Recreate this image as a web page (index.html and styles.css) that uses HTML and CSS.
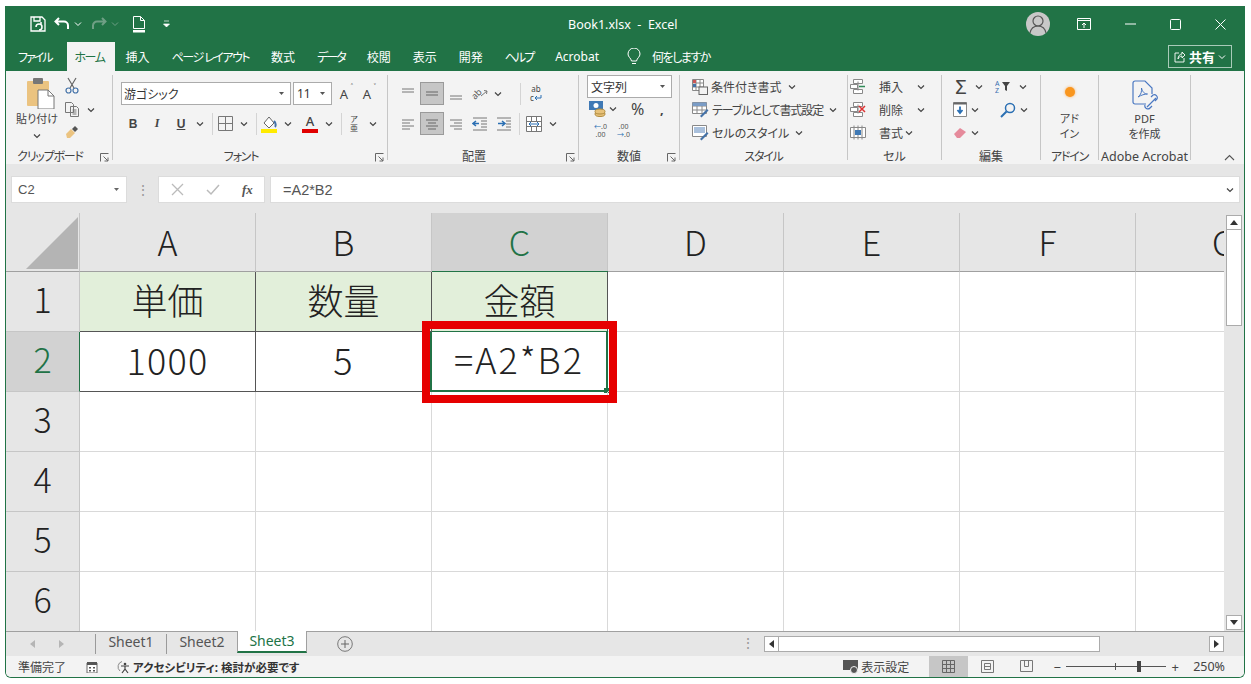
FILE: index.html
```html
<!DOCTYPE html>
<html lang="ja">
<head>
    <meta charset="UTF-8">
    <title>Book1.xlsx - Excel</title>
    <link rel="stylesheet" href="styles.css">
</head>
<body>
<svg class="defs" width="0" height="0">
    <symbol id="chev" viewBox="0 0 8 6"><path d="M1 1.5 4 4.5 7 1.5" fill="none" stroke="#444" stroke-width="1.2"/></symbol>
    <symbol id="launch" viewBox="0 0 9 9"><path d="M.5 8.5V.5h8M8 8 3.5 3.5M8 4.5V8H4.5" fill="none" stroke="#666"/></symbol>
    <symbol id="lines-top" viewBox="0 0 16 16"><path d="M2 3h12M2 6h12" stroke="#777" fill="none"/></symbol>
    <symbol id="lines-mid" viewBox="0 0 16 16"><path d="M2 6h12M2 9h12" stroke="#666" fill="none"/></symbol>
    <symbol id="lines-bot" viewBox="0 0 16 16"><path d="M2 10h12M2 13h12" stroke="#777" fill="none"/></symbol>
    <symbol id="al-left" viewBox="0 0 16 16"><path d="M2 4h12M2 7h8M2 10h12M2 13h8" stroke="#777" fill="none"/></symbol>
    <symbol id="al-center" viewBox="0 0 16 16"><path d="M2 4h12M4 7h8M2 10h12M4 13h8" stroke="#666" fill="none"/></symbol>
    <symbol id="al-right" viewBox="0 0 16 16"><path d="M2 4h12M6 7h8M2 10h12M6 13h8" stroke="#777" fill="none"/></symbol>
</svg>

<div class="window">
    <!-- タイトルバー -->
    <header class="titlebar">
        <div class="qat">
            <svg class="qat-save" width="18" height="18" viewBox="0 0 18 18"><path d="M2 2h11l3 3v11H2zM5 2v4h6V2" fill="none" stroke="#fff" stroke-width="1.3"/><path d="M7 12a3 3 0 1 1 3 3M12 9v-2" fill="none" stroke="#fff" stroke-width="1.5"/></svg>
            <svg class="qat-undo" width="16" height="14" viewBox="0 0 16 14"><path d="M5 1 1.5 4.5 5 8M2 4.5h8a4 4 0 0 1 4 4V12" fill="none" stroke="#fff" stroke-width="2"/></svg>
            <svg class="qat-chev" width="8" height="6"><path d="M1 1.5 4 4.5 7 1.5" fill="none" stroke="#fff"/></svg>
            <svg class="qat-redo" width="16" height="14" viewBox="0 0 16 14"><path d="M11 1l3.500 3.500L11 8M14 4.500H6a4 4 0 0 0-4 4V12" fill="none" stroke="#6f9f85" stroke-width="2"/></svg>
            <svg class="qat-chev" width="8" height="6"><path d="M1 1.5 4 4.5 7 1.5" fill="none" stroke="#6f9f85"/></svg>
            <svg class="qat-new" width="14" height="17" viewBox="0 0 14 17"><path d="M1.500.5h7l4 4v8h-11zM8.500.5v4h4" fill="none" stroke="#fff"/><path d="M1 14h12v2.500H1z" fill="#fff"/></svg>
            <svg class="qat-more" width="7" height="8" viewBox="0 0 7 8"><path d="M1 1h5M.5 4h6L3.500 7z" fill="#fff" stroke="#fff" stroke-width=".7"/></svg>
        </div>
        <div class="doc-title">Book1.xlsx&nbsp; -&nbsp; Excel</div>
        <div class="win-controls">
            <div class="avatar"><svg width="24" height="24" viewBox="0 0 24 24"><circle cx="12" cy="9" r="5" fill="none" stroke="#555" stroke-width="1.2"/><path d="M4 21c1-5 4-7 8-7s7 2 8 7" fill="none" stroke="#555" stroke-width="1.2"/></svg></div>
            <svg class="ctl-display" width="14" height="12" viewBox="0 0 14 12"><path d="M.5.500h13v11H.5zM.5 2.500h13M7 10V5M5 7l2-2 2 2" fill="none" stroke="#fff"/></svg>
            <svg class="ctl-min" width="11" height="2"><path d="M0 1h11" stroke="#fff"/></svg>
            <svg class="ctl-max" width="11" height="11"><rect x=".5" y=".5" width="10" height="10" rx="1" fill="none" stroke="#fff"/></svg>
            <svg class="ctl-close" width="11" height="11"><path d="M.5.500l10 10M10.500.500l-10 10" stroke="#fff"/></svg>
        </div>
    </header>

    <!-- タブ -->
    <nav class="tabs">
        <span class="tab tab-file tab-tight">ファイル</span>
        <span class="tab tab-active tab-kana">ホーム</span>
        <span class="tab">挿入</span>
        <span class="tab tab-kana">ページ レイアウト</span>
        <span class="tab">数式</span>
        <span class="tab tab-tight">データ</span>
        <span class="tab">校閲</span>
        <span class="tab">表示</span>
        <span class="tab">開発</span>
        <span class="tab tab-tight">ヘルプ</span>
        <span class="tab">Acrobat</span>
        <svg class="bulb" width="14" height="18" viewBox="0 0 14 18"><path d="M4.500 13C4 10 1 9 1 6a6 6 0 0 1 12 0c0 3-3 4-3.500 7zM5 15.500h4" fill="none" stroke="#fff"/></svg>
        <span class="tab tab-tell tab-kana">何をしますか</span>
        <div class="share">
            <svg width="12" height="12" viewBox="0 0 12 12"><path d="M5 2H1v9h9V7M4 8c0-3 2-5 4-5V1l3 3-3 3V5C6 5 5 6 4 8z" fill="none" stroke="#fff" stroke-width=".9"/></svg>
            <b>共有</b>
            <svg width="8" height="6"><path d="M1 1.500 4 4.500 7 1.500" fill="none" stroke="#fff"/></svg>
        </div>
    </nav>

    <!-- リボン -->
    <section class="ribbon">
        <div class="group g-clip">
            <div class="clip-body">
                <div class="paste">
                    <svg width="28" height="31" viewBox="0 0 28 31"><rect x="0" y="3" width="22" height="25" rx="1" fill="#ebc380"/><rect x="6" y="0" width="10" height="6" rx="1" fill="#777"/><path d="M11 12h10l6 6v13H11z" fill="#fff" stroke="#777"/><path d="M21 12v6h6" fill="none" stroke="#777"/></svg>
                    <span class="paste-text">貼り付け</span>
                    <svg class="chev" width="8" height="6"><use href="#chev"/></svg>
                </div>
                <div class="clip-tools">
                    <svg width="14" height="17" viewBox="0 0 14 17"><path d="M3 1l6 10M11 1 5 11" stroke="#666" stroke-width="1.2"/><circle cx="3.500" cy="13.500" r="2.500" fill="none" stroke="#4472a8" stroke-width="1.2"/><circle cx="10.500" cy="13.500" r="2.500" fill="none" stroke="#4472a8" stroke-width="1.2"/></svg>
                    <svg width="14" height="15" viewBox="0 0 14 15"><path d="M.5.500h6l2 2v8h-8zM5.500 4.500h6l2 2v8h-8z" fill="#f3f3f3" stroke="#777"/><path d="M7.500 8h4M7.500 10h4M7.500 12h4" stroke="#777"/></svg>
                    <svg width="14" height="14" viewBox="0 0 14 14"><path d="M1 9l5-5 4 4-5 5H2z" fill="#ebc380"/><path d="M7 4l3-3 3 3-3 3z" fill="#555"/></svg>
                </div>
                <svg class="chev clip-chev" width="8" height="6"><use href="#chev"/></svg>
            </div>
            <div class="group-label label-left label-kana">クリップボード<svg class="launcher" width="9" height="9"><use href="#launch"/></svg></div>
        </div>

        <div class="group g-font">
            <div class="group-body two-rows">
                <div class="row">
                    <div class="select select-font">游ゴシック<svg width="7" height="5" viewBox="0 0 7 5"><path d="M1 1h5L3.500 4z" fill="#555"/></svg></div>
                    <div class="select select-size">11<svg width="7" height="5" viewBox="0 0 7 5"><path d="M1 1h5L3.500 4z" fill="#555"/></svg></div>
                    <span class="grow-a">A<i>˄</i></span>
                    <span class="grow-a">A<i>˅</i></span>
                </div>
                <div class="row">
                    <span class="slot fmt-b">B</span>
                    <span class="slot fmt-i">I</span>
                    <span class="slot fmt-u">U</span>
                    <svg class="chev" width="8" height="6"><use href="#chev"/></svg>
                    <span class="vsep"></span>
                    <span class="slot"><svg width="15" height="15" viewBox="0 0 15 15"><path d="M.5.500h14v14H.5zM7.500.500v14M.5 7.500h14" fill="none" stroke="#777"/></svg></span>
                    <svg class="chev chev-wide" width="8" height="6"><use href="#chev"/></svg>
                    <span class="vsep"></span>
                    <span class="slot"><svg width="16" height="18" viewBox="0 0 16 18"><path d="M3 8l5-6 5 6-5 5z" fill="#fff" stroke="#666"/><path d="M13 6c2 2 2 5 1 6" fill="none" stroke="#4472a8" stroke-width="2"/><rect y="14" width="16" height="4" fill="#ffeb00"/></svg></span>
                    <svg class="chev" width="8" height="6"><use href="#chev"/></svg>
                    <span class="slot font-color">A</span>
                    <svg class="chev" width="8" height="6"><use href="#chev"/></svg>
                    <span class="vsep"></span>
                    <span class="slot furigana">ア<br>亜</span>
                    <svg class="chev" width="8" height="6"><use href="#chev"/></svg>
                </div>
            </div>
            <div class="group-label label-left label-kana">フォント<svg class="launcher" width="9" height="9"><use href="#launch"/></svg></div>
        </div>

        <div class="group g-align">
            <div class="group-body two-rows align-body">
                <div class="row">
                    <span class="slot"><svg width="16" height="16"><use href="#lines-top"/></svg></span>
                    <span class="slot slot-on"><svg width="16" height="16"><use href="#lines-mid"/></svg></span>
                    <span class="slot"><svg width="16" height="16"><use href="#lines-bot"/></svg></span>
                    <span class="slot"><svg class="orient-icon" width="16" height="15" viewBox="0 0 16 15"><text x="0" y="11" class="orient" transform="rotate(-45 5 9)">ab</text><path d="M9 10l6-5M12 4.500l3 .5-.5 3" fill="none" stroke="#777"/></svg></span>
                    <svg class="chev chev-tight" width="8" height="6"><use href="#chev"/></svg>
                    <span class="vsep vsep-wrap"></span>
                    <span class="slot wrap-icon">ab<br>c<svg width="8" height="6" viewBox="0 0 8 6"><path d="M7 0v3H1M3 1 1 3l2 2" fill="none" stroke="#2a6fb3"/></svg></span>
                </div>
                <div class="row">
                    <span class="slot"><svg width="16" height="16"><use href="#al-left"/></svg></span>
                    <span class="slot slot-on"><svg width="16" height="16"><use href="#al-center"/></svg></span>
                    <span class="slot"><svg width="16" height="16"><use href="#al-right"/></svg></span>
                    <span class="slot"><svg width="16" height="15" viewBox="0 0 16 15"><path d="M1 7.500h6M4 5 1 7.500 4 10" fill="none" stroke="#2a6fb3" stroke-width="1.500"/><path d="M1 2h14M9 5h6M9 8h6M9 11h6M1 14h14" stroke="#777"/></svg></span>
                    <span class="slot"><svg width="16" height="15" viewBox="0 0 16 15"><path d="M8 7.500H2M6 5l3 2.500L6 10" fill="none" stroke="#2a6fb3" stroke-width="1.500"/><path d="M1 2h14M10 5h5M10 8h5M10 11h5M1 14h14" stroke="#777"/></svg></span>
                    <span class="vsep vsep-merge"></span>
                    <span class="slot"><svg width="16" height="16" viewBox="0 0 16 16"><path d="M.5.500h15v15H.5zM.5 5.500h15M.5 10.500h15M5.500.500v5M10.500.500v5M5.500 10.500v5M10.500 10.500v5" fill="#fff" stroke="#777"/><path d="M3 8h10M5 6 3 8l2 2M11 6l2 2-2 2" fill="none" stroke="#2a6fb3"/></svg></span>
                    <svg class="chev" width="8" height="6"><use href="#chev"/></svg>
                </div>
            </div>
            <div class="group-label label-left">配置<svg class="launcher" width="9" height="9"><use href="#launch"/></svg></div>
        </div>

        <div class="group g-number">
            <div class="group-body three-rows number-body">
                <div class="select select-format">文字列<svg width="7" height="5" viewBox="0 0 7 5"><path d="M1 1h5L3.500 4z" fill="#555"/></svg></div>
                <div class="row num-row">
                    <svg width="17" height="16" viewBox="0 0 17 16"><rect width="14" height="9" fill="#3f79b5"/><circle cx="7" cy="4.500" r="2.500" fill="#fff"/><ellipse cx="11" cy="13" rx="5" ry="2.500" fill="#e8c27a" stroke="#b08b3e"/><ellipse cx="11" cy="10.500" rx="5" ry="2.500" fill="#e8c27a" stroke="#b08b3e"/></svg>
                    <svg class="chev" width="8" height="6"><use href="#chev"/></svg>
                    <span class="percent">%</span>
                    <span class="comma">,</span>
                </div>
                <div class="row num-row">
                    <span class="dec"><i>←</i>.0<br>.00</span>
                    <span class="dec">.00<br><i>→</i>.0</span>
                </div>
            </div>
            <div class="group-label">数値<svg class="launcher" width="9" height="9"><use href="#launch"/></svg></div>
        </div>

        <div class="group g-style">
            <div class="group-body three-rows style-body">
                <div class="cmd"><svg width="16" height="16" viewBox="0 0 16 16"><path d="M.5.500h11v11H.5zM4 .500v11M8 .500v11M.5 4h11M.5 8h11" fill="#fff" stroke="#888"/><path d="M1 1h3v3H1z" fill="#c55"/><path d="M1 5h3v3H1z" fill="#4472a8"/><rect x="7" y="8" width="8.500" height="7.500" fill="#f3f3f3" stroke="#666"/></svg>条件付き書式<svg class="chev" width="8" height="6"><use href="#chev"/></svg></div>
                <div class="cmd"><svg width="17" height="16" viewBox="0 0 17 16"><path d="M.5.500h14v11H.5zM.5 4h14M5 4v7.500M10 4v7.500M.5 8h14" fill="#fff" stroke="#888"/><path d="M.5.500h14V4H.5z" fill="#7a9cc6"/><path d="M8 14l7-7 1.500 1.500-7 7z" fill="#4472a8"/></svg><span class="cmd-tight">テーブルとして書式設定</span><svg class="chev" width="8" height="6"><use href="#chev"/></svg></div>
                <div class="cmd"><svg width="17" height="16" viewBox="0 0 17 16"><path d="M.5.500h14v11H.5z" fill="#fff" stroke="#888"/><path d="M2 2h11v6H2z" fill="#a9c0dc"/><path d="M8 14l7-7 1.500 1.500-7 7z" fill="#4472a8"/></svg>セルのスタイル<svg class="chev" width="8" height="6"><use href="#chev"/></svg></div>
            </div>
            <div class="group-label label-kana">スタイル</div>
        </div>

        <div class="group g-cells">
            <div class="group-body three-rows cells-body">
                <div class="cmd"><svg width="16" height="15" viewBox="0 0 16 15"><path d="M3.500.500h9v4h-9zM.5 5.500h7v4h-7zM3.500 10.500h9v4h-9zM8 2.500v9" fill="#fff" stroke="#888"/><path d="M9 7.500h6" stroke="#2f8a57" stroke-width="1.500"/></svg><span class="cmd-text">挿入</span><svg class="chev chev-far" width="8" height="6"><use href="#chev"/></svg></div>
                <div class="cmd"><svg width="16" height="15" viewBox="0 0 16 15"><path d="M3.500.500h9v4h-9zM.5 5.500h7v4h-7zM3.500 10.500h9v4h-9zM8 2.500v9" fill="#fff" stroke="#888"/><path d="M9 4l6 6M15 4l-6 6" stroke="#d33" stroke-width="1.500"/></svg><span class="cmd-text">削除</span><svg class="chev chev-far" width="8" height="6"><use href="#chev"/></svg></div>
                <div class="cmd"><svg width="16" height="15" viewBox="0 0 16 15"><path d="M.5 2.500h15v10H.5zM4 .500v14M8 .500v14M12 .500v14" fill="#fff" stroke="#888"/><rect x="5" y="5" width="6" height="5" fill="#3f79b5"/></svg><span class="cmd-text">書式</span><svg class="chev chev-near" width="8" height="6"><use href="#chev"/></svg></div>
            </div>
            <div class="group-label">セル</div>
        </div>

        <div class="group g-edit">
            <div class="group-body three-rows edit-body">
                <div class="row edit-row">
                    <span class="sigma">Σ</span>
                    <svg class="chev chev-sigma" width="8" height="6"><use href="#chev"/></svg>
                    <svg class="sort" width="16" height="14" viewBox="0 0 16 14"><text x="0" y="6" class="sort-az">A</text><text x="0" y="13" class="sort-az">Z</text><path d="M7 2h8l-3 4v5l-2-1V6z" fill="#444"/></svg>
                    <svg class="chev" width="8" height="6"><use href="#chev"/></svg>
                </div>
                <div class="row edit-row">
                    <svg width="14" height="15" viewBox="0 0 14 15"><path d="M.5.500h13v14H.5z" fill="#fff" stroke="#888"/><path d="M.5.500h13v2H.5z" fill="#666"/><path d="M7 4.500v6M4.500 8 7 11l2.500-3" fill="none" stroke="#2a6fb3" stroke-width="1.800"/></svg>
                    <svg class="chev chev-fill" width="8" height="6"><use href="#chev"/></svg>
                    <svg class="find" width="16" height="16" viewBox="0 0 16 16"><circle cx="10" cy="6" r="4.500" fill="none" stroke="#2a6fb3" stroke-width="1.500"/><path d="M6.500 9.500 1 15" stroke="#2a6fb3" stroke-width="2"/></svg>
                    <svg class="chev" width="8" height="6"><use href="#chev"/></svg>
                </div>
                <div class="row edit-row">
                    <svg width="14" height="12" viewBox="0 0 14 12"><path d="M1 7l6-6 6 4-6 6H4z" fill="#e58a9b"/></svg>
                    <svg class="chev chev-fill" width="8" height="6"><use href="#chev"/></svg>
                </div>
            </div>
            <div class="group-label">編集</div>
        </div>

        <div class="group g-addin">
            <div class="group-body big-btn">
                <span class="addin-dot"></span>
                <span class="big-text">アド<br>イン</span>
            </div>
            <div class="group-label label-kana">アドイン</div>
        </div>

        <div class="group g-acro">
            <div class="group-body big-btn">
                <svg class="acro-icon" width="26" height="32" viewBox="0 0 26 32"><path d="M14 24H3a2 2 0 0 1-2-2V3a2 2 0 0 1 2-2h10l7 7v6" fill="none" stroke="#4a78c2" stroke-width="1.200"/><path d="M6 17c3-2 4-6 3.500-9 1 4 3 6 6 6-3 0-6 1-9.500 3z" fill="none" stroke="#4a78c2"/><path d="M15 27l9-9M13 25a3 3 0 0 0 5 3l2-2M19 17l2-2a3 3 0 0 1 4 4l-2 2" fill="none" stroke="#4a78c2" stroke-width="1.200"/></svg>
                <span class="big-text">PDF<br>を作成</span>
            </div>
            <div class="group-label label-acro">Adobe Acrobat</div>
        </div>
        <svg class="collapse" width="11" height="7" viewBox="0 0 11 7"><path d="M1 6l4.500-4.500L10 6" fill="none" stroke="#555" stroke-width="1.100"/></svg>
    </section>

    <!-- 数式バー -->
    <section class="formula-bar">
        <div class="name-box">C2<svg width="7" height="5" viewBox="0 0 7 5"><path d="M1 1h5L3.500 4z" fill="#666"/></svg></div>
        <div class="fx-dots">⋮</div>
        <div class="fx-box">
            <svg width="13" height="13" viewBox="0 0 13 13"><path d="M1 1l11 11M12 1 1 12" stroke="#bbb" stroke-width="1.300"/></svg>
            <svg width="14" height="12" viewBox="0 0 14 12"><path d="M1 6l4 4 8-9" fill="none" stroke="#bbb" stroke-width="1.500"/></svg>
            <span class="fx">fx</span>
        </div>
        <div class="formula-input">=A2*B2<svg width="8" height="6"><use href="#chev"/></svg></div>
    </section>

    <!-- シート -->
    <section class="sheet-area">
        <div class="sheet">
            <div class="corner"><span class="corner-tri"></span></div>
            <div class="col-head">A</div>
            <div class="col-head">B</div>
            <div class="col-head col-on">C</div>
            <div class="col-head">D</div>
            <div class="col-head">E</div>
            <div class="col-head">F</div>
            <div class="col-head">G</div>

            <div class="row-head">1</div>
            <div class="cell cell-title">単価</div>
            <div class="cell cell-title">数量</div>
            <div class="cell cell-title cell-title-on">金額</div>
            <div class="cell"></div><div class="cell"></div><div class="cell"></div><div class="cell"></div>

            <div class="row-head row-on">2</div>
            <div class="cell cell-data">1000</div>
            <div class="cell cell-data">5</div>
            <div class="cell cell-active">=A2*B2<span class="fill-handle"></span></div>
            <div class="cell"></div><div class="cell"></div><div class="cell"></div><div class="cell"></div>

            <div class="row-head">3</div>
            <div class="cell"></div><div class="cell"></div><div class="cell"></div><div class="cell"></div><div class="cell"></div><div class="cell"></div><div class="cell"></div>
            <div class="row-head">4</div>
            <div class="cell"></div><div class="cell"></div><div class="cell"></div><div class="cell"></div><div class="cell"></div><div class="cell"></div><div class="cell"></div>
            <div class="row-head">5</div>
            <div class="cell"></div><div class="cell"></div><div class="cell"></div><div class="cell"></div><div class="cell"></div><div class="cell"></div><div class="cell"></div>
            <div class="row-head">6</div>
            <div class="cell"></div><div class="cell"></div><div class="cell"></div><div class="cell"></div><div class="cell"></div><div class="cell"></div><div class="cell"></div>

            <div class="red-box"></div>
        </div>
        <div class="vscroll">
            <div class="sb-btn"><svg width="8" height="5"><path d="M0 5h8L4 0z" fill="#333"/></svg></div>
            <div class="vthumb"></div>
            <div class="sb-btn sb-btn-end"><svg width="8" height="5"><path d="M0 0h8L4 5z" fill="#333"/></svg></div>
        </div>
    </section>

    <!-- シートタブ -->
    <section class="sheet-tabs">
        <svg class="tab-nav" width="34" height="8" viewBox="0 0 34 8"><path d="M5 0v8L0 4zM29 0v8l5-4z" fill="#b5b5b5"/></svg>
        <span class="tab-sep"></span>
        <span class="sheet-tab">Sheet1</span>
        <span class="tab-sep"></span>
        <span class="sheet-tab">Sheet2</span>
        <span class="sheet-tab sheet-tab-on">Sheet3</span>
        <svg class="add-sheet" width="16" height="16" viewBox="0 0 16 16"><circle cx="8" cy="8" r="7.300" fill="none" stroke="#777"/><path d="M8 4v8M4 8h8" stroke="#666"/></svg>
        <span class="hdots">⋮</span>
        <div class="hscroll">
            <div class="sb-btn"><svg width="5" height="8"><path d="M5 0v8L0 4z" fill="#333"/></svg></div>
            <div class="hthumb"></div>
            <div class="sb-btn"><svg width="5" height="8"><path d="M0 0v8l5-4z" fill="#333"/></svg></div>
        </div>
    </section>

    <!-- ステータスバー -->
    <footer class="statusbar">
        <span class="ready">準備完了</span>
        <svg class="st-macro" width="12" height="12" viewBox="0 0 12 12"><path d="M1 2h10v10H1z" fill="#fff" stroke="#666"/><path d="M1 1h10v3H1zM3 6h2v1.500H3zM7 6h2v1.500H7zM3 9h2v1.500H3zM7 9h2v1.500H7z" fill="#555"/></svg>
        <svg class="st-access" width="14" height="14" viewBox="0 0 14 14"><path d="M5 1.500A5.500 5.500 0 0 0 3 11" fill="none" stroke="#888"/><circle cx="8" cy="4" r="1.300" fill="#444"/><path d="M4 6h8M8 6v3l-3 4M8 9l3 4" fill="none" stroke="#444" stroke-width="1.200"/></svg>
        <b class="access-text">アクセシビリティ: 検討が必要です</b>
        <div class="display-set">
            <svg width="16" height="14" viewBox="0 0 16 14"><rect width="15" height="10" fill="#555"/><circle cx="11" cy="10" r="3.500" fill="#555" stroke="#f3f3f3"/></svg>
            <span>表示設定</span>
        </div>
        <div class="views">
            <span class="view view-on"><svg width="13" height="13" viewBox="0 0 13 13"><path d="M.5.500h12v12H.5zM4.500.500v12M8.500.500v12M.5 4.500h12M.5 8.500h12" fill="none" stroke="#666"/></svg></span>
            <span class="view"><svg width="13" height="13" viewBox="0 0 13 13"><path d="M.5.500h12v12H.5zM3.500 3.500h6v6h-6zM3.500 6.500h6" fill="none" stroke="#777"/></svg></span>
            <span class="view"><svg width="13" height="13" viewBox="0 0 13 13"><path d="M.5.500h12v11H.5zM4.500.500v6h4v-6" fill="none" stroke="#777"/></svg></span>
        </div>
        <div class="zoom-slider">
            <span class="zoom-sign">−</span>
            <div class="zoom-track"><i class="zoom-tick"></i><i class="zoom-thumb"></i></div>
            <span class="zoom-sign">+</span>
        </div>
        <span class="zoom-value">250%</span>
    </footer>
</div>
</body>
</html>
```

FILE: styles.css
```css
/* 基本 */
* {
    box-sizing: border-box;
}

html, body {
    margin: 0;
    height: 100%;
    overflow: hidden;
    background-color: #ffffff;
}

body {
    font-family: "Noto Sans", "Noto Sans CJK JP", sans-serif;
    font-feature-settings: "palt";
    color: #444;
}

.defs {
    position: absolute;
}

svg {
    display: block;
    flex: none;
}

.window {
    width: 1240px;
    height: 672px;
    margin: 6px 0 0 5px;
    display: flex;
    flex-direction: column;
    border: 1px solid #217346;
    border-top: none;
    border-radius: 0 0 6px 6px;
    overflow: hidden;
}

/* タイトルバー */
.titlebar {
    height: 36px;
    flex: none;
    background-color: #217346;
    display: flex;
    align-items: center;
    position: relative;
    color: #fff;
}

.qat {
    display: flex;
    align-items: center;
    padding-left: 23px;
}

.qat-undo { margin-left: 7px; }
.qat-chev { margin-left: 4px; }
.qat-redo { margin-left: 9px; }
.qat-new { margin-left: 13px; }
.qat-more { margin-left: 17px; }

.doc-title {
    position: absolute;
    left: 562px;
    top: 10px;
    font-size: 12.5px;
    line-height: 18px;
}

.win-controls {
    margin-left: auto;
    display: flex;
    align-items: center;
    padding-right: 18px;
}

.avatar {
    width: 24px;
    height: 24px;
    border-radius: 50%;
    background-color: #c8c8c8;
}

.ctl-display { margin-left: 27px; }
.ctl-min { margin-left: 34px; }
.ctl-max { margin-left: 34px; }
.ctl-close { margin-left: 34px; }

/* タブ */
.tabs {
    height: 29px;
    flex: none;
    background-color: #217346;
    display: flex;
    align-items: stretch;
    padding-left: 1px;
    color: #fff;
    font-size: 12px;
}

.tab {
    display: flex;
    align-items: center;
    padding: 0 11px;
    white-space: nowrap;
}

.tab-kana {
    letter-spacing: -1.5px;
}

.tab-tight {
    letter-spacing: -2px;
}

.tab-file {
    padding-right: 15px;
}

.tab-active {
    background-color: #f3f3f3;
    color: #217346;
    padding: 0 8px;
    width: 48px;
}

.bulb {
    align-self: center;
    margin-left: 17px;
}

.tab-tell {
    padding-left: 11px;
}

.share {
    margin: 3px 12px 3px auto;
    width: 64px;
    display: flex;
    align-items: center;
    justify-content: center;
    gap: 3px;
    border: 1px solid #a9cbb9;
    font-size: 13px;
}

/* リボン */
.ribbon {
    height: 93px;
    flex: none;
    background-color: #f3f3f3;
    display: flex;
    position: relative;
    font-size: 12px;
    color: #444;
}

.group {
    display: flex;
    flex-direction: column;
    height: 85px;
    margin-top: 4px;
    border-right: 1px solid #c6c6c6;
    position: relative;
}

.g-clip { width: 107px; }
.g-font { width: 275px; }
.g-align { width: 191px; }
.g-number { width: 101px; }
.g-style { width: 168px; }
.g-cells { width: 94px; }
.g-edit { width: 99px; }
.g-addin { width: 58px; }
.g-acro { width: 92px; }

.group-body,
.clip-body {
    height: 71px;
    flex: none;
}

.group-label {
    height: 14px;
    line-height: 21px;
    text-align: center;
    font-size: 12px;
    color: #444;
    white-space: nowrap;
    position: relative;
}

.label-left {
    padding-right: 18px;
}

.label-kana {
    letter-spacing: -1.2px;
}

.label-acro {
    font-size: 12.5px;
}

.launcher {
    position: absolute;
    right: 3px;
    top: 7px;
}

.row {
    display: flex;
    align-items: center;
}

.slot {
    width: 24px;
    height: 23px;
    flex: none;
    display: flex;
    align-items: center;
    justify-content: center;
}

.slot-on {
    background-color: #c6c6c6;
    border: 1px solid #9a9a9a;
}

.chev {
    width: 8px;
    height: 6px;
    margin: 0 3px;
}

.chev-wide {
    margin-left: 3px;
}

.vsep {
    width: 1px;
    height: 22px;
    background-color: #d4d4d4;
    margin: 0 0 0 5px;
    flex: none;
}

/* クリップボード */
.clip-body {
    display: flex;
    position: relative;
}

.paste {
    width: 52px;
    padding: 3px 0 0 10px;
    display: flex;
    flex-direction: column;
    align-items: center;
}

.paste svg:first-child {
    margin-left: 8px;
}

.paste-text {
    font-size: 11px;
    line-height: 16px;
    margin-top: 2px;
    white-space: nowrap;
}

.paste .chev {
    margin-top: 6px;
}

.clip-tools {
    display: flex;
    flex-direction: column;
    align-items: center;
    gap: 8px;
    width: 15px;
    margin-left: 6px;
    padding-top: 2px;
}

.clip-chev {
    margin: 32px 0 0 8px;
}

/* フォント */
.two-rows {
    padding: 7px 0 0 8px;
    display: flex;
    flex-direction: column;
    gap: 7px;
}

.select {
    height: 23px;
    background-color: #fff;
    border: 1px solid #ababab;
    display: flex;
    align-items: center;
    justify-content: space-between;
    padding: 0 5px 0 2px;
    font-size: 12px;
    color: #333;
}

.select-font { width: 170px; }
.select-size { width: 39px; margin-left: 2px; padding-left: 3px; }

.grow-a {
    width: 22px;
    margin-left: 1px;
    text-align: center;
    font-size: 13px;
    position: relative;
}

.grow-a i {
    font-style: normal;
    font-size: 8px;
    position: absolute;
    top: -4px;
    right: 2px;
}

.fmt-b { font-weight: 700; font-size: 12px; font-family: "Liberation Sans", sans-serif; }
.fmt-i { font-style: italic; font-weight: 700; font-size: 12px; font-family: "Liberation Serif", serif; }
.fmt-u { font-weight: 700; font-size: 12px; text-decoration: underline; font-family: "Liberation Sans", sans-serif; }

.font-color {
    margin-left: 3px;
    font-size: 13px;
    font-weight: 500;
    line-height: 14px;
    flex-direction: column;
    background: linear-gradient(#e00000, #e00000) center 17px / 16px 4px no-repeat;
    padding-bottom: 5px;
}

.furigana {
    font-size: 8px;
    line-height: 9px;
    display: block;
    text-align: center;
    padding-top: 2px;
}

/* 配置 */
.orient {
    font-size: 9px;
    fill: #555;
}

.orient-icon {
    overflow: visible;
}

.chev-tight {
    margin: 0 0 0 2px;
}

.vsep-wrap {
    margin: 0 3px 0 18px;
}

.vsep-merge {
    margin: 0 2px 0 3px;
}

.wrap-icon {
    display: block;
    font-size: 8px;
    line-height: 9px;
    text-align: center;
    padding-top: 2px;
}

.wrap-icon svg {
    display: inline-block;
}

/* 数値 */
.three-rows {
    padding-top: 0;
    display: flex;
    flex-direction: column;
}

.number-body {
    padding: 0 0 0 8px;
}

.select-format {
    width: 85px;
    flex: none;
    padding-left: 3px;
}

.num-row {
    height: 22px;
    padding-left: 2px;
    flex: none;
}

.percent {
    margin-left: 11px;
    font-size: 16px;
    width: 20px;
}

.comma {
    margin-left: 9px;
    font-weight: 700;
    font-size: 13px;
    line-height: 10px;
}

.dec {
    width: 23px;
    font-size: 7px;
    line-height: 8px;
    text-align: center;
    color: #555;
}

.dec i {
    font-style: normal;
    color: #2a6fb3;
}

/* スタイル・セル */
.style-body {
    padding-left: 12px;
}

.cells-body {
    padding-left: 2px;
}

.cmd {
    height: 23px;
    flex: none;
    display: flex;
    align-items: center;
    gap: 3px;
    white-space: nowrap;
}

.cmd-tight {
    letter-spacing: -1.1px;
}

.cells-body .cmd svg:first-child {
    margin-right: 10px;
}

.cmd-text {
    width: 23px;
}

.chev-far {
    margin-left: 12px;
}

.chev-near {
    margin-left: 0;
}

/* 編集 */
.edit-body {
    padding-left: 11px;
}

.edit-row {
    height: 23px;
    flex: none;
}

.sigma {
    font-size: 20px;
    width: 16px;
    line-height: 20px;
    color: #444;
    text-align: center;
}

.chev-sigma { margin-left: 6px; }
.sort { margin-left: 9px; margin-right: 5px; }
.chev-fill { margin-left: 4px; }
.find { margin-left: 18px; margin-right: 1px; }

.sort-az {
    font-size: 7px;
    fill: #3a6fb0;
}

/* アドイン・Acrobat */
.big-btn {
    display: flex;
    flex-direction: column;
    align-items: center;
    position: relative;
}

.addin-dot {
    width: 10px;
    height: 10px;
    margin-top: 12px;
    border-radius: 50%;
    background-color: #f9961e;
    box-shadow: 0 0 3px #f9b060;
}

.big-text {
    font-size: 11px;
    line-height: 15px;
    text-align: center;
    margin-top: 14px;
}

.acro-icon {
    margin-top: 5px;
}

.acro-icon + .big-text {
    margin-top: -1px;
}

.collapse {
    position: absolute;
    right: 9px;
    bottom: 3px;
}

/* 数式バー */
.formula-bar {
    height: 49px;
    flex: none;
    background-color: #e6e6e6;
    display: flex;
    align-items: flex-start;
    padding: 12px 4px 0 5px;
}

.name-box,
.fx-box,
.formula-input {
    height: 27px;
    background-color: #fff;
    border: 1px solid #dcdcdc;
    display: flex;
    align-items: center;
    font-family: "Liberation Sans", sans-serif;
}

.name-box {
    width: 116px;
    justify-content: space-between;
    padding: 0 6px;
    font-size: 13px;
    color: #555;
}

.fx-dots {
    width: 31px;
    text-align: center;
    line-height: 27px;
    font-size: 14px;
    color: #999;
}

.fx-box {
    width: 107px;
    padding-left: 12px;
    gap: 22px;
}

.fx {
    font-family: "Liberation Serif", serif;
    font-style: italic;
    font-weight: 700;
    font-size: 13px;
    color: #555;
}

.formula-input {
    flex: 1;
    margin-left: 5px;
    justify-content: space-between;
    padding: 0 5px 0 12px;
    font-size: 14.5px;
    color: #555;
}

/* シート */
.sheet-area {
    height: 418px;
    flex: none;
    display: flex;
    background-color: #e6e6e6;
}

.sheet {
    width: 1218px;
    height: 418px;
    flex: none;
    overflow: hidden;
    position: relative;
    display: grid;
    grid-template-columns: 74px repeat(7, 176px);
    grid-template-rows: 59px repeat(6, 60px);
    font-family: "Noto Sans CJK JP", sans-serif;
    font-feature-settings: normal;
    font-weight: 300;
    font-size: 36px;
    color: #222;
    background-color: #fff;
}

.corner {
    background-color: #e6e6e6;
    border-right: 1px solid #c6c6c6;
    border-bottom: 1px solid #a0a0a0;
    position: relative;
}

.corner-tri {
    position: absolute;
    right: 1px;
    bottom: 2px;
    width: 52px;
    height: 52px;
    background-color: #b4b4b4;
    clip-path: polygon(100% 0, 100% 100%, 0 100%);
}

.col-head {
    background-color: #e6e6e6;
    border-right: 1px solid #c6c6c6;
    border-bottom: 1px solid #a0a0a0;
    display: flex;
    align-items: center;
    justify-content: center;
    font-size: 34px;
    padding-bottom: 2px;
}

.col-on {
    background-color: #d2d2d2;
    color: #217346;
    border-bottom-color: #217346;
}

.row-head {
    background-color: #e6e6e6;
    border-right: 1px solid #c6c6c6;
    border-bottom: 1px solid #c6c6c6;
    display: flex;
    align-items: center;
    justify-content: center;
    font-size: 34px;
    padding-bottom: 6px;
}

.row-on {
    background-color: #d2d2d2;
    color: #217346;
    border-right-color: #217346;
}

.cell {
    border-right: 1px solid #d9d9d9;
    border-bottom: 1px solid #d9d9d9;
    display: flex;
    align-items: center;
    justify-content: center;
    position: relative;
    line-height: 1;
    padding-bottom: 6px;
}

.cell-title {
    background-color: #e2efda;
    border-right-color: #555;
    border-bottom-color: #555;
}

.cell-title-on {
    border-bottom-color: #217346;
    box-shadow: 0 -1px 0 #217346;
}

.cell-data {
    border-right-color: #555;
    border-bottom-color: #555;
    letter-spacing: 1.2px;
}

.cell-active {
    border-right: 2px solid #217346;
    border-bottom: 2px solid #217346;
    box-shadow: -2px 0 0 #217346, 0 -1px 0 #217346;
    letter-spacing: 2px;
}

.fill-handle {
    position: absolute;
    right: -3px;
    bottom: -3px;
    width: 5px;
    height: 5px;
    background-color: #217346;
}

/* 赤枠 */
.red-box {
    position: absolute;
    left: 416px;
    top: 108px;
    width: 195px;
    height: 82px;
    border: 8px solid #e60000;
    pointer-events: none;
}

/* スクロールバー */
.vscroll {
    width: 16px;
    margin: 2px 0 0 2px;
    height: 415px;
    display: flex;
    flex-direction: column;
}

.sb-btn {
    width: 16px;
    height: 15px;
    flex: none;
    background-color: #fff;
    border: 1px solid #ababab;
    display: flex;
    align-items: center;
    justify-content: center;
}

.vthumb {
    width: 16px;
    height: 96px;
    background-color: #fff;
    border: 1px solid #ababab;
    border-top: none;
}

.sb-btn-end {
    margin-top: auto;
}

.sheet-tabs {
    height: 25px;
    flex: none;
    background-color: #e6e6e6;
    border-top: 1px solid #a0a0a0;
    display: flex;
    align-items: flex-start;
    font-size: 14px;
    color: #555;
}

.tab-nav {
    margin: 8px 0 0 24px;
}

.tab-sep {
    width: 1px;
    height: 20px;
    margin-top: 2px;
    background-color: #9a9a9a;
}

.tab-nav + .tab-sep {
    margin-left: 31px;
}

.sheet-tab {
    height: 21px;
    line-height: 20px;
    width: 70px;
    text-align: center;
}

.sheet-tab-on {
    background-color: #fff;
    color: #217346;
    border-bottom: 2px solid #217346;
    border-left: 1px solid #a0a0a0;
    border-right: 1px solid #a0a0a0;
    margin-top: -1px;
    height: 22px;
}

.add-sheet {
    margin: 4px 0 0 30px;
}

.hdots {
    margin-left: 388px;
    line-height: 22px;
    color: #999;
}

.hscroll {
    width: 460px;
    margin: 4px 0 0 9px;
    height: 16px;
    display: flex;
}

.hscroll .sb-btn {
    height: 16px;
    width: 15px;
}

.hscroll .sb-btn:last-child {
    margin-left: auto;
}

.hthumb {
    width: 321px;
    background-color: #fff;
    border: 1px solid #ababab;
    border-left: none;
}

/* ステータスバー */
.statusbar {
    flex: 1;
    background-color: #f3f3f3;
    display: flex;
    align-items: center;
    font-size: 12px;
    color: #444;
}

.ready { margin-left: 12px; }
.st-macro { margin-left: 20px; }
.st-access { margin-left: 19px; }

.access-text {
    margin-left: 2px;
    font-size: 11.5px;
    color: #333;
}

.display-set {
    margin-left: auto;
    display: flex;
    align-items: center;
    gap: 2px;
}

.views {
    display: flex;
    align-self: stretch;
    margin-left: 20px;
}

.view {
    width: 39px;
    display: flex;
    align-items: center;
    justify-content: center;
}

.view-on {
    background-color: #c6c6c6;
}

.zoom-slider {
    display: flex;
    align-items: center;
    margin-left: 6px;
    gap: 4px;
}

.zoom-sign {
    width: 10px;
    text-align: center;
    font-size: 13px;
}

.zoom-track {
    width: 100px;
    height: 1px;
    background-color: #555;
    position: relative;
}

.zoom-tick {
    position: absolute;
    left: 49px;
    top: -3px;
    width: 1px;
    height: 7px;
    background-color: #555;
}

.zoom-thumb {
    position: absolute;
    left: 71px;
    top: -5px;
    width: 4px;
    height: 11px;
    background-color: #444;
}

.zoom-value {
    margin: 0 19px 0 13px;
    font-size: 12.5px;
}
```
